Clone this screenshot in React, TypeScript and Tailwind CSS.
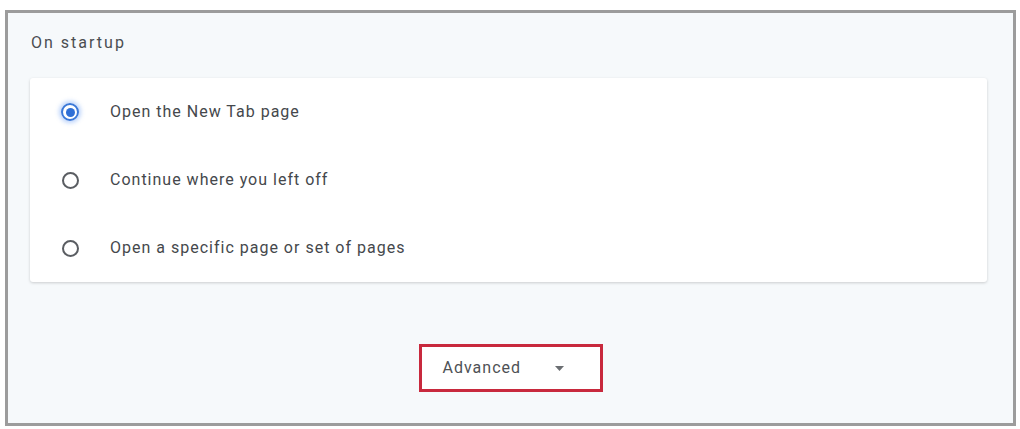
const options = [
  "Open the New Tab page",
  "Continue where you left off",
  "Open a specific page or set of pages",
];

function Radio({ checked }: { checked: boolean }) {
  if (checked) {
    return (
      <span className="flex h-[18px] w-[18px] items-center justify-center rounded-full border-2 border-[#3b78d8] shadow-[0_0_4px_2px_rgba(66,133,244,0.35)]">
        <span className="h-[9px] w-[9px] rounded-full bg-[#2f6fd6]" />
      </span>
    );
  }
  return <span className="block h-[17px] w-[17px] rounded-full border-2 border-[#5a5d62]" />;
}

export default function App() {
  return (
    <div className="h-[429px] w-[1020px] bg-white pb-[3px] pl-[5px] pr-[4px] pt-[10px] font-['Roboto',sans-serif]">
      <div className="flex h-full flex-col border-[3px] border-[#9c9c9c] bg-[#f6f9fb]">
        <div className="flex h-[65px] items-center pb-[5px] pl-[23px] text-[16px] tracking-[2px] text-[#4a4d51]">
          On startup
        </div>

        <div className="ml-[22px] mr-[26px] rounded-[3px] bg-white shadow-[0_1px_3px_rgba(0,0,0,0.18)]">
          {options.map((label, i) => (
            <div key={label} className="flex h-[68px] items-center">
              <div className="flex w-[80px] justify-center">
                <Radio checked={i === 0} />
              </div>
              <span className="text-[16px] tracking-[1px] text-[#45484c]">{label}</span>
            </div>
          ))}
        </div>

        <div className="flex flex-1 items-start justify-center pt-[62px]">
          <div className="flex h-[48px] w-[184px] items-center border-[3px] border-[#c8293d] bg-white pl-[21px]">
            <span className="text-[16px] tracking-[1px] text-[#4e5155]">Advanced</span>
            <svg className="ml-[34px]" width="9" height="5" viewBox="0 0 9 5">
              <path d="M0 0h9L4.5 5z" fill="#6b6e72" />
            </svg>
          </div>
        </div>
      </div>
    </div>
  );
}
